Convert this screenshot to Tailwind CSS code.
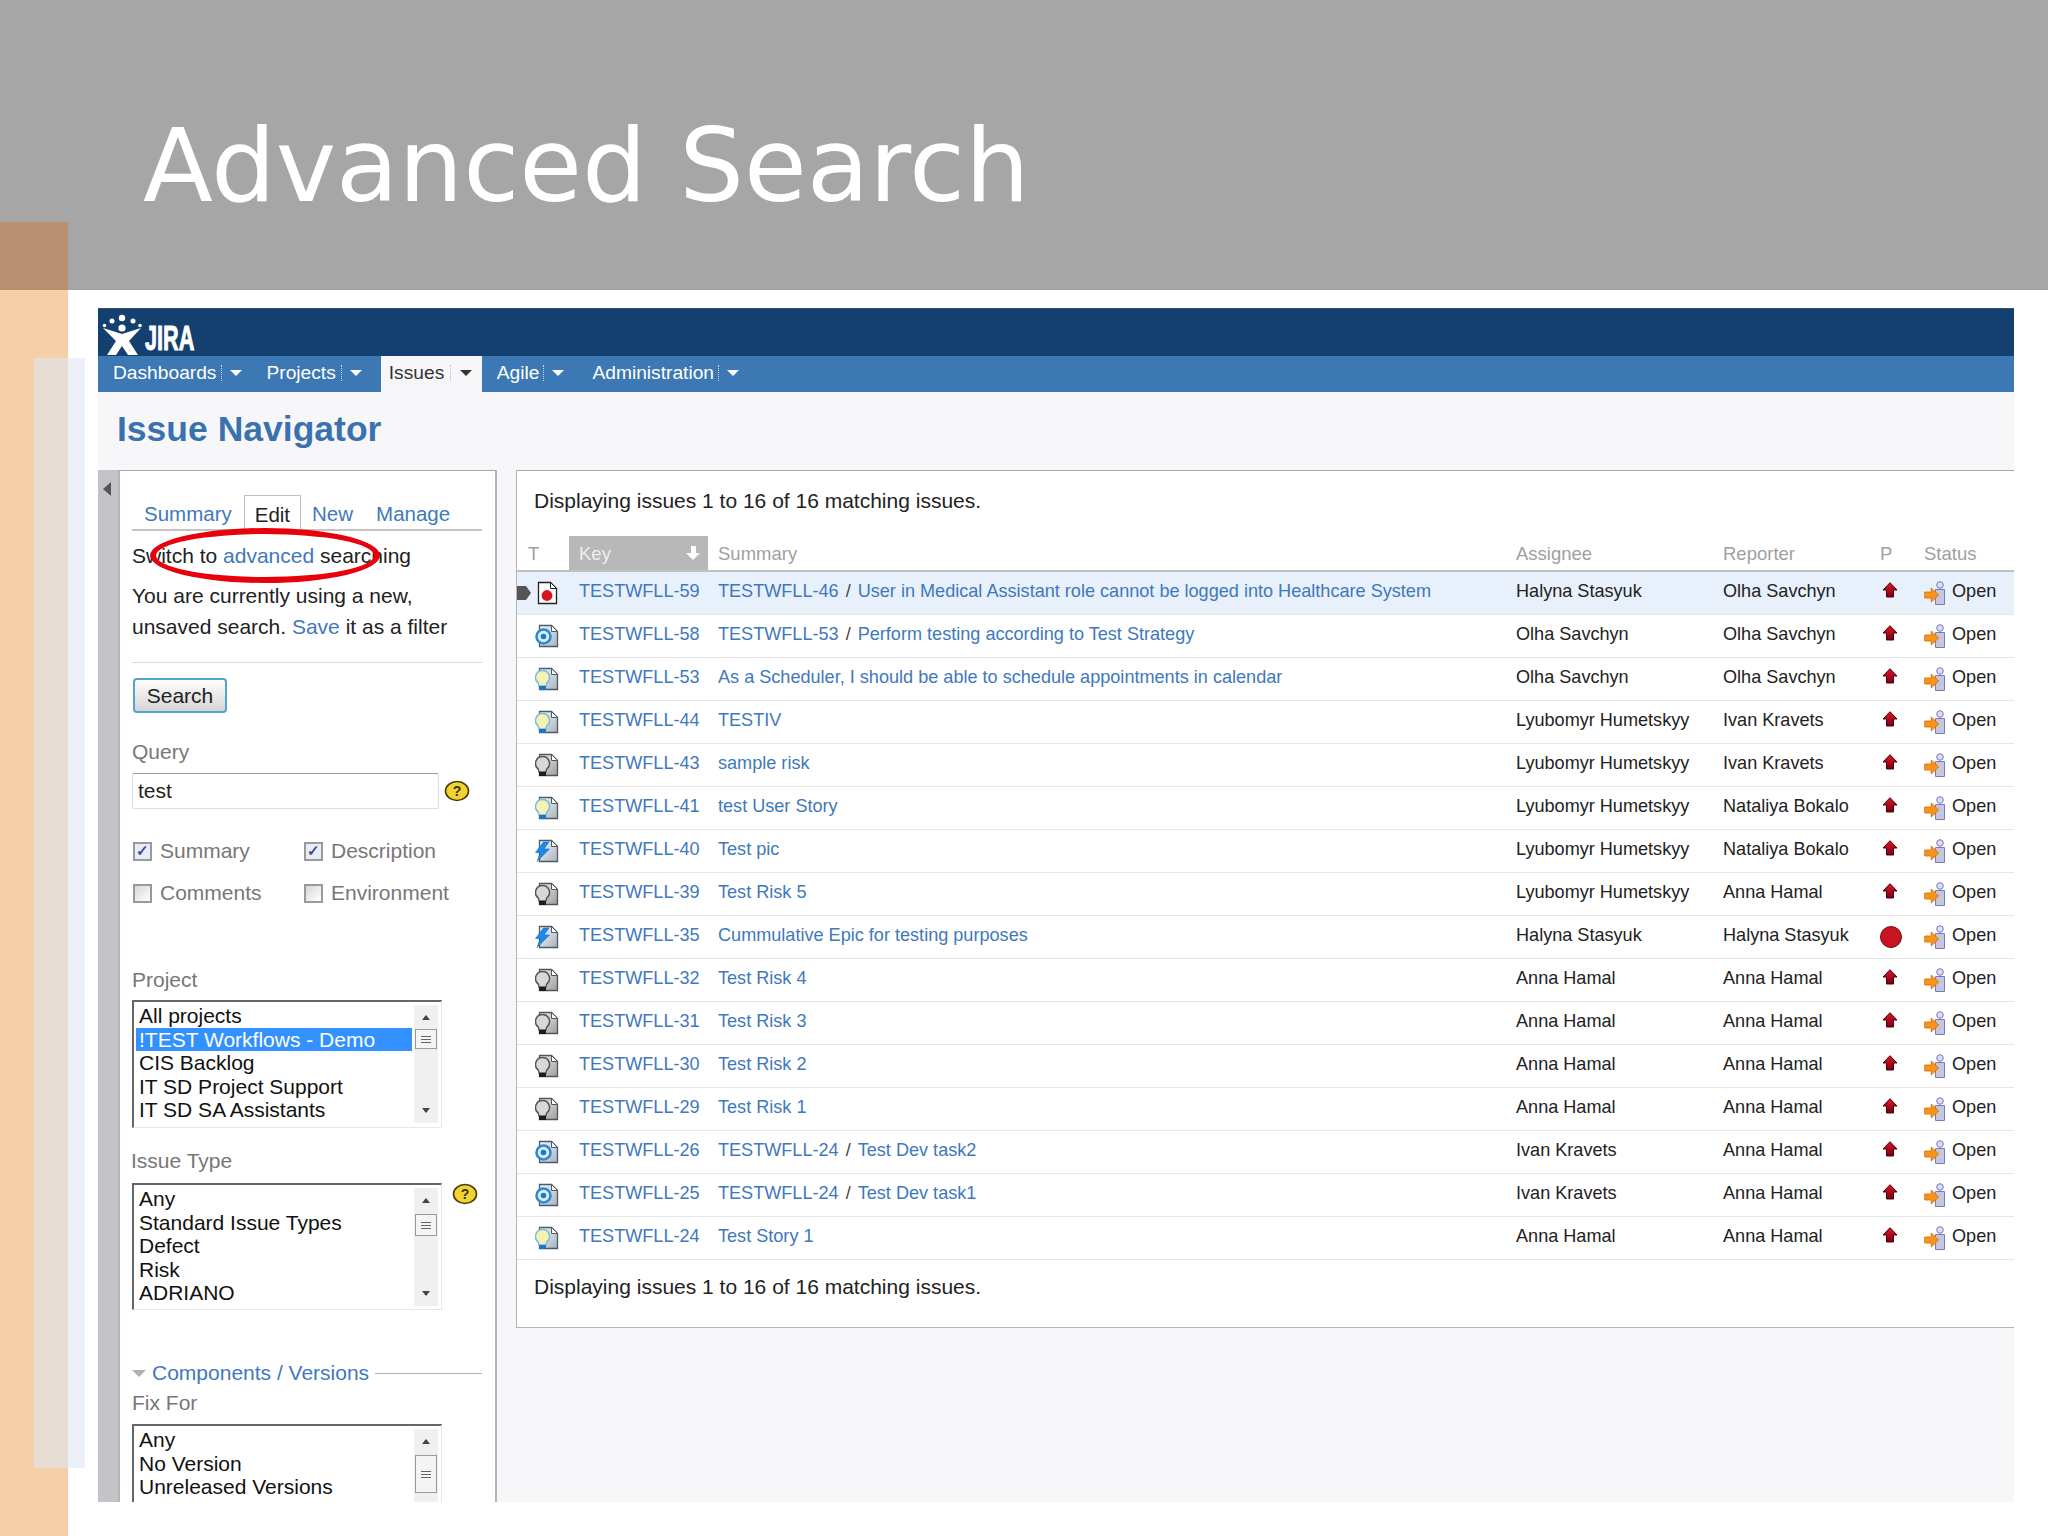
<!DOCTYPE html>
<html lang="en">
<head>
    <meta charset="UTF-8">
    <title>Advanced Search</title>
    <script src="https://cdn.jsdelivr.net/npm/@tailwindcss/browser@4"></script>
</head>
<body class="relative w-[2048px] h-[1536px] overflow-hidden bg-white font-['Liberation_Sans',sans-serif]">
    <svg class="absolute w-0 h-0">
        <defs>
            <linearGradient id="paper" x1="0" y1="0" x2="1" y2="1"><stop offset="0" stop-color="#f8fafc"/><stop offset="1" stop-color="#a6b2bc"/></linearGradient>
            <linearGradient id="grey" x1="0" y1="0" x2="1" y2="1"><stop offset="0" stop-color="#f0f0f0"/><stop offset="1" stop-color="#9c9c9c"/></linearGradient>
            <linearGradient id="prio-fill" x1="0" y1="0" x2="0" y2="1"><stop offset="0" stop-color="#e0142a"/><stop offset="1" stop-color="#7a0010"/></linearGradient>
            <symbol id="doc" viewBox="0 0 24 24"><path d="M4.500 1.500h12l6 6v15h-18z" fill="url(#paper)" stroke="#4e5a64" stroke-width="1.300"/><path d="M16.500 1.500v6h6z" fill="#fff" stroke="#4e5a64" stroke-width="1"/></symbol>
            <symbol id="docg" viewBox="0 0 24 24"><path d="M4.500 1.500h12l6 6v15h-18z" fill="url(#grey)" stroke="#555" stroke-width="1.300"/><path d="M16.500 1.500v6h6z" fill="#fff" stroke="#555" stroke-width="1"/></symbol>
            <symbol id="bug" viewBox="0 0 24 24"><path d="M3.500 1.500h12l6 6v15h-18z" fill="#fff" stroke="#222" stroke-width="1.300"/><path d="M15.500 1.500v6h6z" fill="#fff" stroke="#222" stroke-width="1"/><circle cx="12" cy="14.500" r="5.400" fill="#d8141c"/></symbol>
            <symbol id="task" viewBox="0 0 24 24"><use href="#doc"/><circle cx="8.500" cy="12.500" r="7" fill="#d8ecfa" stroke="#2a8ad6" stroke-width="2.600"/><circle cx="8.500" cy="12.500" r="2.800" fill="#1f78c4"/></symbol>
            <symbol id="story" viewBox="0 0 24 24"><use href="#doc"/><path d="M7.500 3.500a7 7 0 0 1 4.200 12.600l-.8 3H4.100l-.8-3A7 7 0 0 1 7.500 3.500z" fill="#f6f2b4" stroke="#78bce0" stroke-width="1.500"/><rect x="4" y="19" width="7" height="4" fill="#1c76c8"/></symbol>
            <symbol id="risk" viewBox="0 0 24 24"><use href="#docg"/><path d="M7.500 3.500a7 7 0 0 1 4.200 12.600l-.8 3H4.100l-.8-3A7 7 0 0 1 7.500 3.500z" fill="#d8d8d8" stroke="#555" stroke-width="1.500"/><rect x="4" y="19" width="7" height="4" fill="#1c1c1c"/></symbol>
            <symbol id="epic" viewBox="0 0 24 24"><use href="#doc"/><path d="M8.500 3 .5 13.500h5L2 22.500 14.500 10H9L14 3z" fill="#1c8ae8" stroke="#1268b8" stroke-width=".6"/></symbol>
            <symbol id="prio" viewBox="0 0 16 16"><path d="M8 .7 15 8H11.500v7H4.500V8H1z" fill="url(#prio-fill)" stroke="#4a0008" stroke-width="1"/></symbol>
            <symbol id="open" viewBox="0 0 24 24"><circle cx="16" cy="4" r="3.300" fill="#dcdcf4" stroke="#7a7ab8"/><path d="M11.500 8.500h9v15h-9z" fill="#c4c8dc" stroke="#7a7ab8"/><path d="M.7 11h6.500V7l7.500 7-7.500 7v-4H.7z" fill="#f7941e" stroke="#d86a00" stroke-width=".8"/></symbol>
            <symbol id="help" viewBox="0 0 26 22"><ellipse cx="13" cy="11" rx="11.500" ry="9.500" fill="#f2d430" stroke="#4a3c08" stroke-width="1.600"/><text x="13" y="16" text-anchor="middle" font-family="Liberation Sans" font-weight="700" font-size="14" fill="#3a3008">?</text></symbol>
        </defs>
    </svg>

    <header class="flex h-[290px] bg-[#a6a6a6]">
        <div class="w-[68px] h-[68px] mt-[222px] bg-[#b89070]"></div>
        <h1 class="ml-[75px] pt-[106px] text-[102px] leading-[120px] font-['DejaVu_Sans',sans-serif] font-normal text-white">Advanced Search</h1>
    </header>

    <div class="flex h-[1246px]">
        <div class="w-[68px] bg-[#f5cfa8]"></div>
        <main class="ml-[30px] mt-[18px] w-[1916px] h-[1194px] overflow-hidden bg-[#f7f7fa]">
            <div class="flex items-end h-[48px] bg-[#144070] border-t border-[#33506e] pl-[4px]">
                <svg width="42" height="43" viewBox="0 0 42 43">
                    <g fill="#fff"><circle cx="20" cy="5" r="3.200"/><circle cx="10" cy="8" r="2.500"/><circle cx="31" cy="8" r="2.500"/><circle cx="2.500" cy="12.500" r="1.800"/><circle cx="38" cy="12.500" r="1.800"/><circle cx="20" cy="15" r="3.600"/>
                    <path d="M1 15 20 21 39 15 27 28 36 42H26L20 33 14 42H5L14 28z"/></g>
                </svg>
                <span class="origin-left scale-x-[.62] ml-[1px] -mb-[1px] text-[35px] leading-[38px] font-bold text-white [-webkit-text-stroke:1px_white]">JIRA</span>
            </div>

            <nav class="flex h-[36px] bg-[#3c78b4] pl-[15px] pb-[3px] text-[19.200px] leading-[33px] text-white">
                <span class="flex items-center">Dashboards<i class="h-[16px] ml-[5px] border-l border-dotted border-white/70"></i><i class="ml-[8px] border-x-[6px] border-t-[6px] border-x-transparent border-t-white"></i></span>
                <span class="flex items-center ml-[24px]">Projects<i class="h-[16px] ml-[5px] border-l border-dotted border-white/70"></i><i class="ml-[8px] border-x-[6px] border-t-[6px] border-x-transparent border-t-white"></i></span>
                <span class="flex items-center ml-[19px] -mb-[3px] pb-[3px] pl-[8px] w-[101px] bg-[#f7f7fa] text-[#333]">Issues<i class="h-[16px] ml-[6px] border-l border-dotted border-[#bbb]"></i><i class="ml-[9px] border-x-[6px] border-t-[6px] border-x-transparent border-t-[#333]"></i></span>
                <span class="flex items-center ml-[15px]">Agile<i class="h-[16px] ml-[4px] border-l border-dotted border-white/70"></i><i class="ml-[8px] border-x-[6px] border-t-[6px] border-x-transparent border-t-white"></i></span>
                <span class="flex items-center ml-[28px]">Administration<i class="h-[16px] ml-[4px] border-l border-dotted border-white/70"></i><i class="ml-[8px] border-x-[6px] border-t-[6px] border-x-transparent border-t-white"></i></span>
            </nav>

            <h2 class="pl-[19px] pt-[17px] h-[78px] text-[35.500px] leading-[40px] font-bold text-[#3a72b0]">Issue Navigator</h2>

            <div class="flex h-[1032px]">
                <div class="w-[20px] bg-[#c4c4c8] pl-[5px] pt-[12px]"><i class="block w-0 h-0 border-y-[7px] border-r-[8px] border-y-transparent border-r-[#555]"></i></div>

                <aside class="w-[379px] pl-[12px] pr-[13px] pt-[24px] bg-white border-t border-x-2 border-[#b4b4b8] border-t-[#a8a8ac] text-[21px] text-[#222]">
                    <div class="flex h-[36px] border-b-2 border-[#c4c4c4] text-[20.500px] text-[#3f78bd] leading-[37px]">
                        <span class="ml-[12px]">Summary</span>
                        <span class="ml-[12px] px-[10px] bg-white h-[37px] border border-b-0 border-[#c0c0c0] text-[#222]">Edit</span>
                        <span class="ml-[11px]">New</span>
                        <span class="ml-[23px]">Manage</span>
                    </div>
                    <p class="mt-[12px] leading-[26px]">Switch to <span class="text-[#3f78bd]">advanced</span> searching</p>
                    <p class="mt-[12px] leading-[30.500px]">You are currently using a new,<br>unsaved search. <span class="text-[#3f78bd]">Save</span> it as a filter</p>
                    <div class="mt-[20px] border-t border-[#dcdcdc]"></div>
                    <button class="block mt-[15px] ml-[1px] w-[94px] h-[35px] rounded-[4px] border-2 border-[#52a4d0] bg-gradient-to-b from-white to-[#d4d4d4] text-[21px] leading-[30px] text-[#222]">Search</button>

                    <div class="mt-[26px] leading-[26px] text-[#777]">Query</div>
                    <div class="flex items-center mt-[8px]">
                        <div class="w-[307px] h-[36px] pl-[5px] rounded-[2px] border border-[#dedede] border-t-[#999] leading-[34px]">test</div>
                        <svg width="26" height="22" class="ml-[5px]"><use href="#help"/></svg>
                    </div>

                    <div class="grid grid-cols-[172px_1fr] gap-y-[16px] mt-[29px] text-[#777] leading-[26px]">
                        <label class="flex items-center"><i class="flex justify-center items-center w-[19px] h-[19px] mr-[8px] ml-[1px] border-2 border-[#9a9a9a] bg-[#e8ecf6] text-[15px] font-bold not-italic text-[#3a4a9a]">✓</i>Summary</label>
                        <label class="flex items-center"><i class="flex justify-center items-center w-[19px] h-[19px] mr-[8px] border-2 border-[#9a9a9a] bg-[#e8ecf6] text-[15px] font-bold not-italic text-[#3a4a9a]">✓</i>Description</label>
                        <label class="flex items-center"><i class="w-[19px] h-[19px] mr-[8px] ml-[1px] border-2 border-[#9a9a9a] bg-gradient-to-br from-[#d8d8d8] to-white"></i>Comments</label>
                        <label class="flex items-center"><i class="w-[19px] h-[19px] mr-[8px] border-2 border-[#9a9a9a] bg-gradient-to-br from-[#d8d8d8] to-white"></i>Environment</label>
                    </div>

                    <div class="mt-[61px] leading-[26px] text-[#777]">Project</div>
                    <div class="flex mt-[7px] w-[310px] h-[128px] border-t-2 border-l-2 border-[#666] border-r border-b border-r-[#e8e8e8] border-b-[#e8e8e8] pl-[2px] pt-[2px]">
                        <div class="flex-1 text-[21px] leading-[23.500px] text-[#111]">
                            <div class="pl-[3px]">All projects</div>
                            <div class="pl-[3px] mr-[2px] bg-[#3390ff] text-white">!TEST Workflows - Demo</div>
                            <div class="pl-[3px]">CIS Backlog</div>
                            <div class="pl-[3px]">IT SD Project Support</div>
                            <div class="pl-[3px]">IT SD SA Assistants</div>
                        </div>
                        <div class="relative w-[24px] h-[118px] mr-[3px] mt-[1px] bg-[#f0f0f0]">
                            <i class="absolute left-[8px] top-[10px] border-x-[4px] border-b-[5px] border-x-transparent border-b-[#444]"></i>
                            <i class="flex flex-col justify-center gap-[2px] absolute left-[1px] top-[24px] w-[22px] h-[20px] px-[5px] border border-[#9a9a9a] bg-[#f4f4f4]"><b class="h-px bg-[#666]"></b><b class="h-px bg-[#666]"></b><b class="h-px bg-[#666]"></b></i>
                            <i class="absolute left-[8px] bottom-[10px] border-x-[4px] border-t-[5px] border-x-transparent border-t-[#444]"></i>
                        </div>
                    </div>

                    <div class="mt-[20px] -ml-[1px] leading-[26px] text-[#777]">Issue Type</div>
                    <div class="flex items-start mt-[9px]">
                        <div class="flex w-[310px] h-[127px] border-t-2 border-l-2 border-[#666] border-r border-b border-r-[#e8e8e8] border-b-[#e8e8e8] pl-[5px] pt-[2px]">
                            <div class="flex-1 text-[21px] leading-[23.500px] text-[#111]">
                                <div>Any</div><div>Standard Issue Types</div><div>Defect</div><div>Risk</div><div>ADRIANO</div>
                            </div>
                            <div class="relative w-[24px] h-[118px] mr-[3px] mt-[1px] bg-[#f0f0f0]">
                                <i class="absolute left-[8px] top-[10px] border-x-[4px] border-b-[5px] border-x-transparent border-b-[#444]"></i>
                                <i class="flex flex-col justify-center gap-[2px] absolute left-[1px] top-[26px] w-[22px] h-[22px] px-[5px] border border-[#9a9a9a] bg-[#f4f4f4]"><b class="h-px bg-[#666]"></b><b class="h-px bg-[#666]"></b><b class="h-px bg-[#666]"></b></i>
                                <i class="absolute left-[8px] bottom-[10px] border-x-[4px] border-t-[5px] border-x-transparent border-t-[#444]"></i>
                            </div>
                        </div>
                        <svg width="26" height="22" class="ml-[10px]"><use href="#help"/></svg>
                    </div>

                    <div class="flex items-center mt-[50px] leading-[26px]">
                        <i class="mr-[6px] border-x-[7px] border-t-[7px] border-x-transparent border-t-[#b0b0b0]"></i>
                        <span class="text-[#3f78bd]">Components / Versions</span>
                        <b class="flex-1 ml-[6px] h-px bg-[#b0b0b0]"></b>
                    </div>
                    <div class="mt-[4px] leading-[26px] text-[#777]">Fix For</div>
                    <div class="flex mt-[8px] w-[310px] h-[100px] border-t-2 border-l-2 border-[#666] border-r border-r-[#e8e8e8] pl-[5px] pt-[2px]">
                        <div class="flex-1 text-[21px] leading-[23.500px] text-[#111]">
                            <div>Any</div><div>No Version</div><div>Unreleased Versions</div>
                        </div>
                        <div class="relative w-[24px] h-[100px] mr-[3px] mt-[1px] bg-[#f0f0f0]">
                            <i class="absolute left-[8px] top-[10px] border-x-[4px] border-b-[5px] border-x-transparent border-b-[#444]"></i>
                            <i class="flex flex-col justify-center gap-[2px] absolute left-[1px] top-[26px] w-[22px] h-[38px] px-[5px] border border-[#9a9a9a] bg-[#f4f4f4]"><b class="h-px bg-[#666]"></b><b class="h-px bg-[#666]"></b><b class="h-px bg-[#666]"></b></i>
                        </div>
                    </div>
                </aside>

                <section class="ml-[19px] w-[1498px] h-[858px] bg-white border-t border-l border-b border-[#b4b4b8] border-t-[#a8a8ac]">
                    <p class="pl-[17px] pt-[17px] h-[65px] text-[21px] leading-[26px] text-[#222]">Displaying issues 1 to 16 of 16 matching issues.</p>
                    <div class="flex h-[36px] border-b-2 border-[#c0c0c0] text-[18.500px] leading-[35px] text-[#a0a0a0]">
                        <span class="w-[52px] pl-[11px]">T</span>
                        <span class="flex justify-between items-center w-[139px] pl-[10px] pr-[8px] bg-[#b8b8b8] text-[#eee]">Key<i class="flex flex-col items-center"><b class="w-[5px] h-[7px] bg-white"></b><b class="border-x-[7px] border-t-[7px] border-x-transparent border-t-white"></b></i></span>
                        <span class="w-[808px] pl-[10px]">Summary</span>
                        <span class="w-[207px]">Assignee</span>
                        <span class="w-[157px]">Reporter</span>
                        <span class="w-[44px]">P</span>
                        <span>Status</span>
                    </div>
                    <div id="rows"></div>
                    <p class="pl-[17px] pt-[14px] text-[21px] leading-[26px] text-[#222]">Displaying issues 1 to 16 of 16 matching issues.</p>
                </section>
            </div>
        </main>
    </div>

    <!-- overlays on top of the slide -->
    <div class="absolute left-[34px] top-[358px] w-[51px] h-[1110px] bg-[#dfe6f3]/60"></div>
    <div class="absolute left-[150px] top-[528px] w-[230px] h-[55px] rounded-[50%] border-[6px] border-[#e8000c]"></div>

    <script>
        const rows = [
            ['bug', 'TESTWFLL-59', 'TESTWFLL-46', 'User in Medical Assistant role cannot be logged into Healthcare System', 'Halyna Stasyuk', 'Olha Savchyn'],
            ['task', 'TESTWFLL-58', 'TESTWFLL-53', 'Perform testing according to Test Strategy', 'Olha Savchyn', 'Olha Savchyn'],
            ['story', 'TESTWFLL-53', '', 'As a Scheduler, I should be able to schedule appointments in calendar', 'Olha Savchyn', 'Olha Savchyn'],
            ['story', 'TESTWFLL-44', '', 'TESTIV', 'Lyubomyr Humetskyy', 'Ivan Kravets'],
            ['risk', 'TESTWFLL-43', '', 'sample risk', 'Lyubomyr Humetskyy', 'Ivan Kravets'],
            ['story', 'TESTWFLL-41', '', 'test User Story', 'Lyubomyr Humetskyy', 'Nataliya Bokalo'],
            ['epic', 'TESTWFLL-40', '', 'Test pic', 'Lyubomyr Humetskyy', 'Nataliya Bokalo'],
            ['risk', 'TESTWFLL-39', '', 'Test Risk 5', 'Lyubomyr Humetskyy', 'Anna Hamal'],
            ['epic', 'TESTWFLL-35', '', 'Cummulative Epic for testing purposes', 'Halyna Stasyuk', 'Halyna Stasyuk'],
            ['risk', 'TESTWFLL-32', '', 'Test Risk 4', 'Anna Hamal', 'Anna Hamal'],
            ['risk', 'TESTWFLL-31', '', 'Test Risk 3', 'Anna Hamal', 'Anna Hamal'],
            ['risk', 'TESTWFLL-30', '', 'Test Risk 2', 'Anna Hamal', 'Anna Hamal'],
            ['risk', 'TESTWFLL-29', '', 'Test Risk 1', 'Anna Hamal', 'Anna Hamal'],
            ['task', 'TESTWFLL-26', 'TESTWFLL-24', 'Test Dev task2', 'Ivan Kravets', 'Anna Hamal'],
            ['task', 'TESTWFLL-25', 'TESTWFLL-24', 'Test Dev task1', 'Ivan Kravets', 'Anna Hamal'],
            ['story', 'TESTWFLL-24', '', 'Test Story 1', 'Anna Hamal', 'Anna Hamal']
        ];
        document.getElementById('rows').innerHTML = rows.map(function (r, i) {
            const parent = r[2] ? '<span class="text-[#3f78bd]">' + r[2] + '</span><span class="mx-[7px] text-[#444]">/</span>' : '';
            const prio = r[1] === 'TESTWFLL-35'
                ? '<i class="block w-[22px] h-[22px] -ml-[2px] rounded-full bg-[#c81420] border border-[#7a0a10]"></i>'
                : '<svg width="16" height="16" class="mb-[7px]"><use href="#prio"/></svg>';
            const marker = i === 0 ? '<i class="absolute left-0 top-[14px] w-[9px] h-[14px] bg-[#555]"></i><i class="absolute left-[9px] top-[14px] border-y-[7px] border-l-[5px] border-y-transparent border-l-[#555]"></i>' : '';
            return '<div class="relative flex items-center h-[43px] border-b border-[#e6e6e6] text-[18.100px] ' + (i === 0 ? 'bg-[#e8f0fb]' : '') + '">' + marker +
                '<svg width="24" height="24" class="ml-[18px] mr-[10px] shrink-0"><use href="#' + r[0] + '"/></svg>' +
                '<span class="w-[139px] pl-[10px] mb-[3px] text-[#3f78bd]">' + r[1] + '</span>' +
                '<span class="w-[808px] pl-[10px] mb-[3px]">' + parent + '<span class="text-[#3f78bd]">' + r[3] + '</span></span>' +
                '<span class="w-[207px] mb-[3px] text-[#222]">' + r[4] + '</span>' +
                '<span class="w-[157px] mb-[3px] text-[#222]">' + r[5] + '</span>' +
                '<span class="w-[44px] pl-[2px]">' + prio + '</span>' +
                '<svg width="24" height="24" class="shrink-0 mr-[4px]"><use href="#open"/></svg><span class="mb-[3px] text-[#222]">Open</span>' +
                '</div>';
        }).join('');
    </script>
</body>
</html>
